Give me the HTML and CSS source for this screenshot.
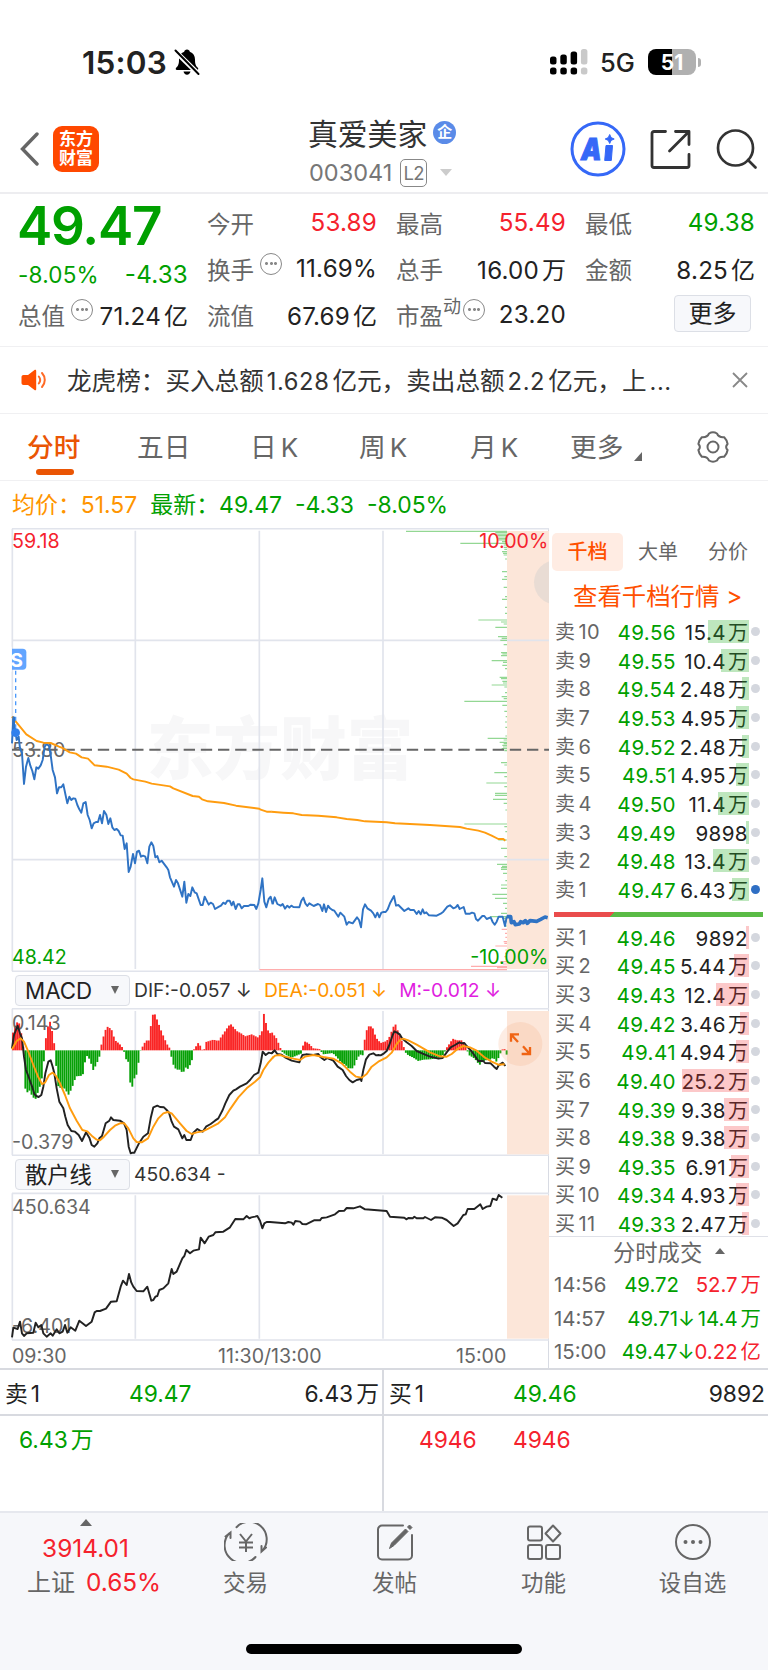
FILE: index.html
```html
<!DOCTYPE html>
<html lang="zh-CN">
<head>
<meta charset="UTF-8">
<meta name="viewport" content="width=device-width, initial-scale=1.0">
<title>真爱美家 003041</title>
<link rel="stylesheet" href="styles.css">
</head>
<body>
<div class="status-bar">
    <span class="time">15:03</span>
    <svg class="bell" width="26" height="28" viewBox="0 0 26 28">
        <path d="M13 1.500c-1.600 0-2.600 1-2.800 2.200C6.600 5 5 8 5 11.500c0 5-1 6.500-2.800 8.200-.9.900-.5 2.300.8 2.300h20c1.300 0 1.700-1.400.8-2.300C22 18 21 16.500 21 11.500 21 8 19.400 5 15.800 3.700 15.600 2.500 14.600 1.500 13 1.500zM9.500 23.500h7c-.4 2-1.700 3.200-3.500 3.200s-3.100-1.200-3.500-3.200z"/>
        <path d="M1.500 3.500l23 22.500" stroke="#fff" stroke-width="5"/>
        <path d="M1.500 2.500l23 23.500" stroke="#000" stroke-width="2" stroke-linecap="round"/>
    </svg>
    <svg class="signal" width="38" height="28" viewBox="0 0 38 28">
        <rect x="0" y="8.500" width="6.500" height="8" rx="2.500"/>
        <rect x="10.300" y="6.500" width="6.500" height="10" rx="2.500"/>
        <rect x="20.600" y="3.500" width="6.500" height="13" rx="2.500"/>
        <rect x="30.900" y="1" width="6.500" height="15.500" rx="2.500" fill="#c9c9c9"/>
        <rect x="0" y="19.500" width="6.500" height="7" rx="2.500"/>
        <rect x="10.300" y="19.500" width="6.500" height="7" rx="2.500"/>
        <rect x="20.600" y="19.500" width="6.500" height="7" rx="2.500"/>
        <rect x="30.900" y="19.500" width="6.500" height="7" rx="2.500" fill="#c9c9c9"/>
    </svg>
    <span class="network">5G</span>
    <span class="battery">51</span>
    <span class="battery-tip"></span>
</div>

<div class="header">
    <svg class="back" width="20" height="36" viewBox="0 0 20 36"><path d="M18 3L3.500 18l14.500 15" fill="none" stroke="#666" stroke-width="3.400" stroke-linecap="round"/></svg>
    <div class="logo">东方<br>财富</div>
    <div class="title">
        <div class="stock-name">真爱美家<span class="badge">企</span></div>
        <div class="stock-code">003041<span class="level">L2</span><span class="arrow-down"></span></div>
    </div>
    <svg class="ai" width="56" height="56" viewBox="0 0 56 56">
        <circle cx="28" cy="28" r="26" fill="#fff" stroke="#3568f7" stroke-width="3"/>
        <text x="11" y="38.500" class="ai-text" textLength="20.500" lengthAdjust="spacingAndGlyphs">A</text>
        <path d="M36 24.500h6.500L41.300 39.500H34.700z" fill="#3568f7" stroke="#3568f7" stroke-linejoin="round"/>
        <path d="M39.700 13.500l1.400 3.100 3.100 1.400-3.100 1.400-1.400 3.100-1.400-3.100-3.100-1.400 3.100-1.400z" fill="#3568f7" stroke="#3568f7" stroke-linejoin="round"/>
    </svg>
    <svg class="share" width="42" height="42" viewBox="0 0 42 42" fill="none" stroke="#333" stroke-width="2.800" stroke-linecap="round" stroke-linejoin="round">
        <path d="M15.500 3.500H4a2 2 0 0 0-2 2v32a2 2 0 0 0 2 2h33a2 2 0 0 0 2-2V26.500M25.500 3.500H39V16.500M38.500 4L19.500 23"/>
    </svg>
    <svg class="search" width="42" height="42" viewBox="0 0 42 42" fill="none" stroke="#333" stroke-width="2.700" stroke-linecap="round">
        <circle cx="19.500" cy="20" r="17.500"/><path d="M32 32l7.500 7.500"/>
    </svg>
</div>

<div class="quote">
    <div class="quote-col">
        <div class="price green">49.47</div>
        <div class="item change green"><span>-8.05%</span><span class="amount">-4.33</span></div>
        <div class="item"><label>总值<i class="tip"></i></label><span>71.24<em>亿</em></span></div>
    </div>
    <div class="quote-col">
        <div class="item"><label>今开</label><span class="red">53.89</span></div>
        <div class="item"><label>换手<i class="tip"></i></label><span>11.69%</span></div>
        <div class="item"><label>流值</label><span>67.69<em>亿</em></span></div>
    </div>
    <div class="quote-col">
        <div class="item"><label>最高</label><span class="red">55.49</span></div>
        <div class="item"><label>总手</label><span>16.00<em>万</em></span></div>
        <div class="item"><label>市盈<sup>动</sup><i class="tip near"></i></label><span>23.20</span></div>
    </div>
    <div class="quote-col">
        <div class="item"><label>最低</label><span class="green">49.38</span></div>
        <div class="item"><label>金额</label><span>8.25<em>亿</em></span></div>
        <div class="item end"><button class="more-btn">更多</button></div>
    </div>
</div>

<div class="notice">
    <svg width="26" height="26" viewBox="0 0 26 26">
        <path d="M2.500 8H7l6.500-5c.8-.6 1.700-.2 1.700.8v18.400c0 1-.9 1.400-1.700.8L7 18H2.500C1.300 18 .5 17.200.5 16v-6c0-1.200.8-2 2-2z" fill="#ff4f00"/>
        <path d="M17.800 9.500c1.600 2 1.600 5 0 7M21 6c3.700 4 3.700 10 0 14" fill="none" stroke="#ff6a26" stroke-width="2" stroke-linecap="round"/>
    </svg>
    <p>龙虎榜：买入总额<b>1.628</b>亿元，卖出总额<b>2.2</b>亿元，上<b>...</b></p>
    <svg class="close" width="16" height="16" viewBox="0 0 16 16"><path d="M1 1l14 14M15 1L1 15" stroke="#888" stroke-width="1.800"/></svg>
</div>

<div class="tabs">
    <span class="tab active">分时</span>
    <span class="tab">五日</span>
    <span class="tab">日<b>K</b></span>
    <span class="tab">周<b>K</b></span>
    <span class="tab">月<b>K</b></span>
    <span class="tab tab-more">更多</span>
    <svg class="gear" width="34" height="34" viewBox="0 0 34 34" fill="none" stroke="#666" stroke-width="2">
        <path d="M13 3.500Q17 1 21 3.500C22.500 7 24.500 7.600 28.200 7.200Q31 10 31.600 14C29.600 16 29.600 18 31.600 20Q31 24 28.200 26.800C24.500 26.400 22.500 27 21 30.500Q17 33 13 30.500C11.500 27 9.500 26.400 5.800 26.800Q3 24 2.400 20C4.400 18 4.400 16 2.400 14Q3 10 5.800 7.200C9.500 7.600 11.500 7 13 3.500z" stroke-linejoin="round"/>
        <circle cx="17" cy="17" r="5.500"/>
    </svg>
</div>

<div class="summary">
    <span class="orange">均价：51.57</span>
    <span class="green">最新：49.47</span>
    <span class="green">-4.33</span>
    <span class="green">-8.05%</span>
</div>

<div class="main">
    <div class="charts">
        <!-- intraday price -->
        <svg class="chart" width="549" height="444" viewBox="0 24 1647 1332">
            <text x="440" y="762" class="watermark" textLength="800" lengthAdjust="spacingAndGlyphs">东方财富</text>
            <g class="grid">
                <path d="M36 26H1647M36 361H1647M36 1019H1647M36 1354H1647"/>
                <path d="M37 26V1354M406 32V1347M778 32V1347M1149 32V1347"/>
            </g>
            <rect x="1521" y="33" width="126" height="1314" class="zone"/>
            <path d="M1521 361H1647M1521 1019H1647" class="grid"/>
            <circle cx="1668" cy="187" r="66" fill="#ccc" fill-opacity=".4"/>
            <g id="order-bars" transform="translate(810 0)"></g>
            <path d="M36 689H1647" class="mid-line"/>
            <g class="label">
                <text x="36" y="83" fill="#f5222d">59.18</text>
                <text x="36" y="710" fill="#666">53.80</text>
                <text x="36" y="1333" fill="#00a000">48.42</text>
                <text x="1645" y="83" fill="#f5222d" text-anchor="end">10.00%</text>
                <text x="1645" y="1333" fill="#00a000" text-anchor="end">-10.00%</text>
            </g>
            <polyline class="price-line" points="36,670 40,592 41,625 44,620 50,660 56,650 60,685 66,700 72,792 78,740 85,714 91,737 97,753 103,778 109,742 115,746 122,736 128,720 134,680 140,672 147,678 152,705 158,750 165,772 171,820 177,802 184,802 190,793 196,822 202,850 208,830 214,840 220,835 226,836 232,855 238,868 244,878 250,850 257,846 263,885 269,900 275,925 281,910 288,906 294,906 300,885 306,910 312,873 319,884 325,912 331,895 337,922 343,930 350,927 356,933 362,946 368,947 374,987 380,970 386,1056 392,1040 399,1002 405,1030 411,995 417,992 423,1010 429,1007 436,1010 442,1030 448,980 454,967 460,978 466,1012 472,1008 478,1027 485,1022 491,1030 500,1042 505,1050 510,1072 522,1100 528,1080 534,1090 547,1130 553,1085 559,1148 565,1122 571,1128 577,1102 584,1117 590,1120 602,1155 608,1155 614,1130 626,1154 632,1148 639,1152 645,1167 657,1160 663,1157 670,1148 676,1152 682,1142 689,1142 695,1156 700,1145 707,1167 713,1153 719,1153 725,1165 732,1158 745,1158 752,1154 763,1155 769,1167 775,1150 782,1110 787,1075 793,1145 799,1162 806,1137 812,1130 818,1153"/>
            <polyline class="avg-line" points="36,590 47,604 79,643 110,663 130,668 152,669 177,680 190,685 209,697 228,701 245,712 264,716 284,736 320,740 356,749 380,761 392,774 400,778 436,785 455,791 510,799 520,805 578,828 597,830 606,838 624,844 672,849 708,857 778,866 782,869 800,875 815,875"/>
            <g transform="translate(810 0)">
                <polyline class="avg-line" points="4,875 40,878 70,880 95,885 145,887 200,892 230,897 262,900 285,904 350,907 375,910 480,915 570,921 590,926 625,932 645,938 665,947 685,957 700,957 706,962"/>
                <polyline class="price-line" points="8,1153 14,1132 22,1152 32,1157 38,1152 45,1166 52,1157 58,1163 64,1157 70,1161 88,1162 94,1142 100,1133 106,1150 112,1158 118,1150 131,1158 144,1152 150,1155 157,1173 162,1153 168,1176 174,1157 180,1165 187,1170 193,1172 205,1190 211,1178 223,1190 230,1214 236,1206 248,1210 261,1192 267,1200 273,1222 279,1168 285,1153 292,1165 303,1172 310,1180 316,1192 322,1178 328,1192 334,1178 341,1176 347,1176 353,1168 360,1150 372,1128 378,1157 385,1155 403,1173 415,1165 421,1170 432,1170 440,1182 446,1173 452,1183 458,1168 463,1180 469,1177 477,1186 500,1187 512,1181 520,1175 532,1160 540,1156 550,1165 557,1162 563,1155 569,1167 581,1161 587,1181 600,1181 606,1178 613,1180 618,1197 624,1202 637,1188 643,1188 650,1197 662,1192 668,1206 674,1214 680,1205 686,1190 698,1190 705,1218 710,1190"/>
                <polyline class="auction-line" points="710,1190 722,1190 724,1208 732,1205 736,1214 748,1212 752,1205 760,1208 766,1202 772,1210 780,1202 800,1204 812,1198 825,1191 833,1193"/>
            </g>
            <path d="M47 452V625" stroke="#4a98fb" stroke-width="4" stroke-dasharray="12 11"/>
            <path d="M41 590V625" stroke="#2f73c4" stroke-width="8"/>
            <circle cx="47" cy="638" r="13" fill="#2f80ed"/>
            <path d="M36 386H68Q79 386 79 397V438Q79 449 68 449H36z" fill="#62a5ff"/>
            <text x="31" y="440" class="marker">S</text>
            <path d="M28 380H35V455H28z" fill="#fff"/>
        </svg>

        <div class="indicator">
            <button class="select">MACD<i></i></button>
            <span>DIF:-0.057 ↓</span>
            <span class="orange">DEA:-0.051 ↓</span>
            <span class="magenta">M:-0.012 ↓</span>
        </div>
        <svg class="chart" width="549" height="148" viewBox="0 114 1647 444">
            <g class="grid">
                <path d="M36 116H1647M36 556H1647M37 116V556"/>
                <path d="M406 123V553M778 123V553M1149 123V553"/>
            </g>
            <rect x="1521" y="123" width="126" height="430" class="zone"/>
            <g id="macd-bars"></g>
            <g class="label" fill="#666">
                <text x="36" y="180">0.143</text>
                <text x="36" y="536">-0.379</text>
            </g>
            <polyline class="dark-line" points="36,235 42,195 53,167 60,190 66,205 72,260 78,300 85,318 97,352 103,372 109,378 116,381 124,375 130,350 136,310 145,275 152,271 158,290 163,310 170,355 178,395 190,415 196,440 203,465 214,483 225,485 236,495 246,513 258,487 268,503 275,525 283,530 292,520 298,505 306,498 317,460 328,452 333,442 340,450 360,452 372,460 380,480 386,530 392,550 398,548 403,548 412,530 418,518 430,500 444,490 452,445 460,412 472,407 480,411 492,412 500,420 507,428 515,455 522,470 535,478 547,505 553,495 559,510 572,510 580,488 592,477 600,482 608,485 618,470 632,462 645,452 655,445 668,420 676,400 688,375 700,362 708,358 720,350 740,340 750,330 762,315 775,308 782,280 788,245 797,255 806,248 815,250 822,243"/>
            <polyline class="avg-line" points="36,238 50,213 62,205 72,215 85,245 100,285 115,322 126,342 135,338 147,315 158,308 168,318 180,340 195,375 210,415 230,452 247,480 262,484 275,497 290,509 300,511 312,500 330,480 345,467 360,460 373,460 385,475 400,505 410,516 425,517 444,505 460,470 475,445 490,430 503,426 515,430 540,460 560,483 575,492 590,487 608,484 625,476 655,460 675,442 690,418 715,382 740,355 765,335 780,322 790,300 805,278 820,261"/>
            <g transform="translate(810 0)">
                <polyline class="dark-line" points="5,250 14,241 22,252 35,254 45,262 65,272 88,277 97,255 108,253 130,255 145,252 152,262 163,270 172,264 190,272 203,290 218,300 228,318 238,330 248,337 260,330 272,327 274,333 280,300 288,268 298,254 310,250 318,256 325,255 332,256 342,250 350,243 358,225 368,195 373,184 380,187 390,194 396,205 410,217 425,228 440,243 458,251 480,260 505,266 518,264 530,247 542,232 555,225 568,217 575,220 583,219 590,228 604,243 615,258 625,273 640,273 645,279 662,280 672,290 680,297 686,286 698,278 706,288"/>
                <polyline class="avg-line" points="8,263 15,257 30,255 45,260 70,266 90,270 105,260 130,255 160,261 190,266 215,280 240,305 258,320 275,323 290,312 305,290 325,275 350,262 365,248 380,222 392,208 400,206 415,211 440,224 480,247 510,259 530,260 545,252 565,235 580,228 600,232 620,242 645,263 665,275 685,284 704,283"/>
                <circle cx="751" cy="222" r="66" fill="#f5a37a" fill-opacity=".2"/>
                <path d="M723 215V193H747M724 194L744 216M780 231V252H755M779 251L759 229" fill="none" stroke="#f06414" stroke-width="7"/>
            </g>
        </svg>

        <div class="indicator">
            <button class="select">散户线<i></i></button>
            <span>450.634 -</span>
        </div>
        <svg class="chart" width="549" height="149" viewBox="0 666 1647 447">
            <g class="grid">
                <path d="M36 670H1647M36 1110H1647M37 670V1110"/>
                <path d="M406 676V1106M778 676V1106M1149 676V1106"/>
            </g>
            <rect x="1521" y="676" width="126" height="430" class="zone"/>
            <g class="label" fill="#666">
                <text x="36" y="733">450.634</text>
                <text x="36" y="1089">-6.401</text>
            </g>
            <polyline class="dark-line" points="36,1102 40,1073 53,1077 60,1055 66,1090 72,1098 80,1090 100,1088 107,1058 115,1072 124,1065 130,1090 140,1100 152,1090 158,1097 170,1078 178,1090 188,1085 195,1065 202,1088 212,1072 226,1082 238,1052 258,1068 275,1055 284,1027 290,1023 300,1023 318,1016 333,995 350,994 362,950 369,932 380,945 387,912 394,938 400,950 410,963 430,964 442,950 454,992 460,990 466,980 472,978 478,960 490,955 505,940 515,897 520,912 530,905 547,865 553,858 559,840 570,850 580,842 597,838 602,803 614,820 626,800 640,795 646,787 670,785 690,772 706,747 730,748 740,738 748,745 754,742 765,740 772,738 780,752 787,775 793,760 800,756 812,756"/>
            <g transform="translate(810 0)">
                <polyline class="dark-line" points="0,756 45,760 55,756 65,758 70,764 76,753 90,755 97,762 108,763 132,751 150,751 155,744 170,742 195,733 207,723 223,722 230,714 250,715 270,709 285,718 350,723 360,740 403,743 409,748 415,744 428,745 433,740 440,745 460,745 465,741 483,750 495,742 515,743 530,750 551,768 563,760 580,735 587,733 593,717 613,717 631,703 638,717 650,710 661,708 668,686 680,690 686,675 697,683"/>
            </g>
        </svg>
        <div class="axis"><span>09:30</span><span>11:30/13:00</span><span>15:00</span></div>
    </div>

    <div class="side">
        <div class="side-tabs"><span class="on">千档</span><span>大单</span><span>分价</span></div>
        <div class="view-all">查看千档行情 &gt;</div>
        <div class="book" id="sell"></div>
        <div class="ratio"></div>
        <div class="book" id="buy"></div>
        <div class="deals-title">分时成交<i class="arrow-up"></i></div>
        <div class="deal"><span>14:56</span><span class="green">49.72</span><span class="red vol">52.7<em>万</em></span></div>
        <div class="deal"><span>14:57</span><span class="green down">49.71↓</span><span class="green vol">14.4<em>万</em></span></div>
        <div class="deal"><span>15:00</span><span class="green down">49.47↓</span><span class="red vol">0.22<em>亿</em></span></div>
    </div>
</div>

<div class="queue">
    <div class="queue-col">
        <div class="queue-head"><span>卖<em>1</em></span><span class="green">49.47</span><span>6.43<em>万</em></span></div>
        <div class="queue-list green"><span>6.43<em>万</em></span></div>
    </div>
    <div class="queue-col right">
        <div class="queue-head"><span>买<em>1</em></span><span class="green">49.46</span><span>9892</span></div>
        <div class="queue-list red"><span>4946</span><span>4946</span></div>
    </div>
</div>

<div class="bottom">
    <div class="nav">
        <div class="index">
            <i class="arrow-up"></i>
            <div class="red">3914.01</div>
            <div><label>上证</label><span class="red">0.65%</span></div>
        </div>
        <div class="nav-item">
            <svg width="44" height="38" viewBox="0 0 44 38" fill="none" stroke="#666" stroke-width="2">
                <path d="M12.500 4.200A17.500 17.500 0 0 1 39 27M31.500 34A17.500 17.500 0 0 1 5 10.500M1.500 13.500L6.500 9.500V15M42 24.500L37.500 28.500V23" stroke-linecap="round"/>
                <path d="M16 11l6 7.500 6-7.500M22 18.500V29M15 19.500h14M15 24.500h14"/>
            </svg>
            <span>交易</span>
        </div>
        <div class="nav-item">
            <svg width="38" height="38" viewBox="0 0 38 38" fill="none" stroke="#666" stroke-width="2">
                <path d="M27 2.500H6a4 4 0 0 0-4 4v26a4 4 0 0 0 4 4h26a4 4 0 0 0 4-4V12" stroke-linecap="round"/>
                <path d="M13.500 25.500l2-5.500L29.500 6l2.500 2.500-14 14zM31.500 4l2-2 2.500 2.500-2 2z" fill="#666" stroke-width="1"/>
            </svg>
            <span>发帖</span>
        </div>
        <div class="nav-item">
            <svg width="36" height="38" viewBox="0 0 36 38" fill="none" stroke="#666" stroke-width="2">
                <rect x="2" y="3.500" width="14" height="14" rx="2"/>
                <rect x="2" y="22" width="14" height="14" rx="2"/>
                <rect x="20" y="22" width="14" height="14" rx="2"/>
                <path d="M27 2.500l7.500 8-7.500 8-7.500-8z" stroke-linejoin="round"/>
            </svg>
            <span>功能</span>
        </div>
        <div class="nav-item">
            <svg width="38" height="38" viewBox="0 0 38 38">
                <circle cx="19" cy="19" r="17" fill="none" stroke="#666" stroke-width="2"/>
                <g fill="#666"><circle cx="11.500" cy="19" r="2"/><circle cx="19" cy="19" r="2"/><circle cx="26.500" cy="19" r="2"/></g>
            </svg>
            <span>设自选</span>
        </div>
    </div>
    <div class="home-bar"></div>
</div>

<script src="script.js"></script>
</body>
</html>
```
FILE: styles.css
```css
body {
    font-family: Inter, "Noto Sans CJK SC", sans-serif;
    background-color: #fff;
    color: #222;
    margin: 0;
    width: 768px;
    height: 1670px;
    overflow: hidden;
}

* {
    box-sizing: border-box;
}

em, i {
    font-style: normal;
}

em {
    margin-left: 3px;
}

button {
    font-family: inherit;
    color: #222;
}

svg {
    display: block;
    flex: none;
}

.red { color: #f5222d; }
.green { color: #00a000; }
.orange { color: #ff9500; }
.magenta { color: #e01ee0; }

/* Status bar */
.status-bar {
    display: flex;
    align-items: center;
    height: 106px;
    padding: 18px 0 0 82px;
}

.time {
    font-size: 31.500px;
    font-weight: 600;
    width: 92px;
    letter-spacing: 0.2px;
}

.signal {
    margin-left: 350px;
}

.network {
    font-size: 25.500px;
    font-weight: 500;
    width: 48px;
    margin-left: 12px;
}

.battery {
    width: 48px;
    height: 26px;
    border-radius: 8px;
    background: linear-gradient(90deg, #000 51%, #b0b0b0 51%);
    color: #fff;
    font-size: 21px;
    font-weight: 700;
    line-height: 27px;
    text-align: center;
}

.battery-tip {
    width: 3px;
    height: 9px;
    margin-left: 2px;
    border-radius: 0 4px 4px 0;
    background: #b0b0b0;
}

/* Header */
.header {
    display: flex;
    align-items: center;
    height: 88px;
    padding-left: 19px;
    border-bottom: 2px solid #ededf0;
}

.logo {
    width: 46px;
    height: 46px;
    margin-left: 14px;
    padding-top: 4px;
    border-radius: 9px;
    background: #ff4800;
    color: #fff;
    font-size: 17px;
    font-weight: 700;
    line-height: 19px;
    text-align: center;
}

.title {
    width: 262px;
    margin-left: 154px;
    padding: 6px 0 0 55px;
}

.stock-name {
    display: flex;
    align-items: center;
    height: 41px;
    font-size: 29.800px;
    color: #333;
}

.badge {
    width: 23px;
    height: 23px;
    margin-left: 6px;
    border-radius: 50%;
    background: #5a8be8;
    color: #fff;
    font-size: 15px;
    font-weight: 700;
    line-height: 22px;
    text-align: center;
}

.stock-code {
    display: flex;
    align-items: center;
    height: 40px;
    padding-left: 1px;
    font-size: 23.500px;
    color: #777;
}

.level {
    width: 27px;
    height: 28px;
    margin-left: 8px;
    border: 1.500px solid #888;
    border-radius: 5px;
    font-size: 18.500px;
    letter-spacing: -0.5px;
    line-height: 26px;
    text-align: center;
}

.arrow-down {
    margin-left: 13px;
    border: 6.500px solid transparent;
    border-top: 7px solid #ccc;
    border-bottom: 0;
}

.ai {
    margin-left: 55px;
}

.ai-text {
    font-size: 30px;
    font-weight: 900;
    font-style: italic;
    fill: #3568f7;
    stroke: #3568f7;
    stroke-width: 1px;
}

.share {
    margin-left: 24px;
}

.search {
    margin-left: 24px;
}

/* Quote */
.quote {
    display: flex;
    gap: 19px;
    height: 153px;
    padding: 6px 0 0 18px;
    border-bottom: 1px solid #f0f0f2;
}

.quote-col {
    width: 170px;
    flex: none;
}

.price {
    height: 52px;
    margin-left: -1px;
    font-size: 53px;
    font-weight: 600;
    line-height: 53px;
    letter-spacing: -1.200px;
    white-space: nowrap;
}

.item {
    display: flex;
    justify-content: space-between;
    align-items: center;
    height: 46px;
    padding-bottom: 1px;
    font-size: 24.200px;
    letter-spacing: 0.2px;
    white-space: nowrap;
}

.item label {
    display: flex;
    align-items: center;
    font-size: 23.500px;
    letter-spacing: 0;
    color: #666;
}

.item em {
    font-size: 24px;
    letter-spacing: 0;
}

.item sup {
    font-size: 18px;
    line-height: 20px;
    margin-bottom: 16px;
}

.change {
    height: 46px;
    margin-bottom: -6px;
    font-size: 22.500px;
}

.amount {
    font-size: 24.200px;
}

.end {
    justify-content: flex-end;
    padding: 0 4px 3px 0;
}

.tip {
    width: 22px;
    height: 22px;
    margin: 0 0 10px 6px;
    border: 1.500px solid #888;
    border-radius: 50%;
    background: radial-gradient(circle, #888 1.200px, transparent 1.700px) center / 5px 5px no-repeat,
        radial-gradient(circle, #888 1.200px, transparent 1.700px) 2.500px center / 5px 5px no-repeat,
        radial-gradient(circle, #888 1.200px, transparent 1.700px) 12px center / 5px 5px no-repeat;
}

.near {
    margin-left: 2px;
}

.more-btn {
    width: 77px;
    height: 37px;
    padding: 0;
    border: 1.500px solid #dcdfe6;
    border-radius: 4px;
    background: #f7f8fb;
    font-size: 24px;
    line-height: 33px;
}

/* Notice */
.notice {
    display: flex;
    align-items: center;
    height: 67px;
    padding-left: 21px;
    border-bottom: 1px solid #f0f0f2;
}

.notice p {
    width: 645px;
    margin: 0 0 3px 20px;
    font-size: 24.600px;
    color: #333;
    white-space: nowrap;
}

.notice b {
    margin: 0 3px;
    font-weight: 400;
    font-size: 23.700px;
    letter-spacing: 0.6px;
}

.close {
    margin-left: 20px;
}

/* Period tabs */
.tabs {
    display: flex;
    align-items: center;
    height: 67px;
    padding-left: 27px;
    border-bottom: 1px solid #f0f0f2;
    font-size: 26.700px;
    color: #666;
}

.tab {
    position: relative;
    width: 108px;
    line-height: 60px;
}

.tab b {
    margin-left: 4px;
    font-weight: 400;
    font-size: 26px;
}

.tab:nth-child(2) { width: 113px; margin-left: 2px; }
.tab:nth-child(3) { width: 109px; }
.tab:nth-child(4) { width: 111px; }
.tab:nth-child(5) { width: 100px; }

.active {
    color: #ea5504;
    font-weight: 500;
}

.active::after {
    content: "";
    position: absolute;
    left: 9px;
    bottom: 2px;
    width: 38px;
    height: 6px;
    border-radius: 3px;
    background: #ea5504;
}

.tab-more {
    width: 126px;
}

.tab-more::after {
    content: "";
    position: absolute;
    left: 64px;
    top: 35px;
    border-left: 8px solid transparent;
    border-bottom: 9px solid #666;
}

/* Average / latest line */
.summary {
    display: flex;
    gap: 13px;
    height: 47px;
    padding-left: 12px;
    font-size: 22.950px;
    line-height: 49px;
}

/* Charts */
.main {
    display: flex;
    height: 842px;
    border-bottom: 2px solid #d8dae0;
}

.charts {
    width: 549px;
    flex: none;
    border-right: 1px solid #d8dbe3;
}

.chart {
    width: 549px;
}

.grid {
    fill: none;
    stroke: #e1e4ec;
    stroke-width: 5;
}

.zone {
    fill: #fce6d9;
}

.mid-line {
    stroke: #666;
    stroke-width: 6;
    stroke-dasharray: 34 17.500;
}

.label {
    font-size: 59px;
}

.watermark {
    font-size: 205px;
    font-weight: 900;
    fill: #f7f7f8;
}

.marker {
    font-size: 58px;
    font-weight: 700;
    fill: #fff;
}

.price-line, .auction-line, .avg-line, .dark-line {
    fill: none;
    stroke-width: 5.800;
    stroke-linejoin: round;
}

.price-line, .auction-line { stroke: #2f73c4; }
.auction-line { stroke-width: 11; }
.avg-line { stroke: #ff9c0f; }
.dark-line { stroke: #222; }

.indicator {
    display: flex;
    align-items: center;
    gap: 12px;
    height: 36px;
    padding-left: 15px;
    font-size: 19.300px;
    color: #333;
    white-space: nowrap;
}

.select {
    display: flex;
    align-items: center;
    justify-content: space-between;
    width: 115px;
    height: 31px;
    margin-right: -8px;
    padding: 0 10px 0 9px;
    border: 1.500px solid #dcdfe6;
    border-radius: 4px;
    background: #f7f8fb;
    font-size: 22.300px;
    line-height: 29px;
}

.select i {
    border: 4.500px solid transparent;
    border-top: 8px solid #666;
    border-bottom: 0;
}

.axis {
    display: flex;
    padding-left: 12px;
    font-size: 19.600px;
    line-height: 30px;
    color: #666;
}

.axis span {
    width: 206px;
    flex: none;
}

.axis span + span {
    width: 238px;
}

.axis span:last-child {
    width: auto;
}

/* Order book */
.side {
    width: 219px;
    flex: none;
}

.side-tabs {
    display: flex;
    height: 47px;
    padding: 5px 0 0 3px;
    font-size: 20px;
    color: #666;
}

.side-tabs span {
    width: 70px;
    height: 38px;
    line-height: 39px;
    text-align: center;
}

.side-tabs .on {
    width: 71px;
    border-radius: 5px;
    background: #ffece3;
    color: #ff5000;
    font-weight: 500;
}

.view-all {
    height: 43px;
    padding-left: 24px;
    font-size: 24.400px;
    line-height: 43px;
    color: #ff5000;
    white-space: nowrap;
}

.row {
    position: relative;
    display: flex;
    height: 28.670px;
    padding-left: 6px;
    font-size: 20.600px;
    line-height: 29px;
    letter-spacing: 0.4px;
    white-space: nowrap;
}

.row label {
    width: 50px;
    color: #666;
    font-size: 20px;
}

.row label em {
    margin-left: 3px;
}

.row .num {
    width: 71px;
    text-align: right;
}

.row .vol {
    width: 72px;
    text-align: right;
}

.row .vol em {
    margin-left: 2px;
    font-size: 20px;
    letter-spacing: 0;
}

.depth {
    position: absolute;
    top: 2px;
    right: 19px;
    height: 23px;
    background: rgba(40, 175, 40, 0.3);
}

#buy .depth {
    background: rgba(245, 50, 55, 0.27);
}

.dot {
    width: 9px;
    height: 9px;
    margin: 9px 0 0 3px;
    border-radius: 50%;
    background: #d4d7de;
}

.dot.on {
    background: #2f6fc4;
}

.ratio {
    height: 5px;
    margin: 7px 5px 7px 5px;
    background: linear-gradient(135deg, #ea4c4c 28.500%, #5abb46 28.500%);
}

.deals-title {
    display: flex;
    align-items: center;
    height: 31px;
    margin-top: -3px;
    padding: 0 0 1px 64px;
    border-top: 1.500px solid #dfe1e8;
    font-size: 22.300px;
    color: #666;
}

.arrow-up {
    border: 5px solid transparent;
    border-top: 0;
    border-bottom: 6px solid #666;
}

.deals-title .arrow-up {
    margin-left: 13px;
}

.deal {
    display: flex;
    height: 33.800px;
    padding: 0 7px 0 5px;
    font-size: 20.400px;
    line-height: 35px;
    color: #666;
    white-space: nowrap;
}

.deal span {
    width: 57px;
}

.deal span + span {
    width: 68px;
    text-align: right;
}

.deal span.down {
    width: 84px;
}

.deal span.vol {
    flex: 1;
}

/* Level one queue */
.queue {
    display: flex;
    height: 141px;
    font-size: 22.800px;
    white-space: nowrap;
}

.queue-col {
    width: 384px;
    border-right: 2px solid #d8dae0;
}

.queue-col.right {
    border: 0;
}

.queue-head {
    display: flex;
    height: 46px;
    padding: 0 3px 0 5px;
    border-bottom: 2px solid #d8dae0;
    line-height: 48px;
}

.queue-head span:first-child {
    width: 124px;
}

.queue-head span:last-child {
    margin-left: auto;
}

.queue-list {
    padding-left: 19px;
    line-height: 48px;
}

.queue-list span {
    display: inline-block;
    width: 94px;
}

.right .queue-list {
    padding-left: 35px;
}

/* Bottom bar */
.bottom {
    height: 159px;
    border-top: 2px solid #e6e8ee;
    background: #f6f7fa;
}

.nav {
    display: flex;
    height: 131px;
    color: #666;
    font-size: 22.500px;
}

.index {
    display: flex;
    flex-direction: column;
    align-items: center;
    width: 171px;
    padding-top: 6px;
    line-height: 34px;
}

.index .arrow-up {
    margin-bottom: 5px;
    border-width: 0 6.500px 7px;
}

.index .red {
    font-size: 24.400px;
}

.index label {
    margin: 0 11px 0 17px;
    font-size: 24px;
}

.nav-item {
    display: flex;
    flex-direction: column;
    align-items: center;
    width: 149px;
    padding-top: 10px;
    line-height: 34px;
}

.nav-item span {
    margin-top: 5px;
}

.home-bar {
    width: 276px;
    height: 10px;
    margin: 0 auto;
    border-radius: 5px;
    background: #000;
}
```
FILE: script.js
```js
// [price, volume, depth width, highlighted]
const sell = [
    ['49.56', '15.4万', 41], ['49.55', '10.4万', 28], ['49.54', '2.48万', 7], ['49.53', '4.95万', 13],
    ['49.52', '2.48万', 7], ['49.51', '4.95万', 13], ['49.50', '11.4万', 31], ['49.49', '9898', 3],
    ['49.48', '13.4万', 36], ['49.47', '6.43万', 17, true]
];
const buy = [
    ['49.46', '9892', 3], ['49.45', '5.44万', 15], ['49.43', '12.4万', 33], ['49.42', '3.46万', 9],
    ['49.41', '4.94万', 13], ['49.40', '25.2万', 67], ['49.39', '9.38万', 25], ['49.38', '9.38万', 25],
    ['49.35', '6.91万', 18], ['49.34', '4.93万', 13], ['49.33', '2.47万', 7]
];

function renderBook(id, name, rows, level) {
    document.getElementById(id).innerHTML = rows.map((r, i) => `
        <div class="row">
            <label>${name}<em>${level(i)}</em></label>
            <span class="num green">${r[0]}</span>
            <span class="vol">${r[1].replace('万', '<em>万</em>')}</span>
            <span class="depth" style="width: ${r[2]}px"></span>
            <span class="dot ${r[3] ? 'on' : ''}"></span>
        </div>`).join('');
}

renderBook('sell', '卖', sell, i => 10 - i);
renderBook('buy', '买', buy, i => i + 1);

// MACD histogram, [x, height] key points
const macd = [
    [38,50],[47,80],[56,88],[65,45],[70,10],[73,-105],[80,-128],[88,-120],[97,-138],[106,-148],[115,-122],[124,-95],[131,-40],
    [136,25],[142,65],[149,90],[155,65],[162,25],[167,-20],[172,-105],[180,-112],[195,-115],[205,-134],[215,-115],[228,-78],[248,-76],
    [256,-30],[262,-15],[270,-30],[280,-60],[290,-40],[298,-20],[303,12],[310,40],[320,72],[334,64],[345,30],[358,20],[370,5],
    [377,-25],[385,-35],[391,-100],[396,-113],[402,-85],[408,-80],[415,-40],[420,-4],[426,8],[438,30],[446,28],[452,70],[457,105],
    [463,112],[472,90],[485,55],[500,20],[508,8],[513,-15],[522,-50],[530,-58],[540,-58],[549,-70],[556,-50],[562,-58],[575,-35],
    [580,0],[588,12],[594,22],[600,15],[606,2],[612,0],[618,25],[640,32],[655,28],[670,50],[680,65],[691,80],[700,70],[710,58],
    [725,50],[735,42],[755,48],[775,38],[782,50],[787,60],[790,117],[796,90],[802,65],[808,50],[815,55],[830,35],[838,15],[845,-3],
    [860,-15],[875,-22],[903,-10],[907,8],[913,27],[925,22],[940,6],[958,4],[962,0],[968,-12],[985,-10],[998,-8],[1010,-20],
    [1025,-38],[1035,-42],[1045,-54],[1060,-54],[1072,-22],[1085,-10],[1088,-15],[1092,22],[1100,60],[1108,75],[1118,68],[1128,38],
    [1142,22],[1160,28],[1168,40],[1176,60],[1185,82],[1192,62],[1202,38],[1210,15],[1215,-5],[1225,-15],[1240,-22],[1255,-32],
    [1270,-28],[1290,-27],[1310,-24],[1325,-20],[1335,-3],[1340,8],[1350,22],[1358,35],[1370,30],[1385,30],[1397,15],[1402,-2],
    [1408,-15],[1420,-22],[1430,-32],[1438,-45],[1446,-35],[1455,-30],[1470,-28],[1480,-22],[1490,-35],[1500,-12],[1505,0],
    [1512,8],[1518,-8]
];

function heightAt(x) {
    let i = 1;
    while (i < macd.length - 1 && macd[i][0] < x) i++;
    const [x0, h0] = macd[i - 1];
    const [x1, h1] = macd[i];
    return h0 + (h1 - h0) * (x - x0) / (x1 - x0);
}

let bars = '';
for (let x = 39; x < 1520; x += 6.17) {
    const h = heightAt(x);
    bars += `<rect x="${(x - 2.8).toFixed(1)}" y="${h > 0 ? 241 - h : 241}" width="5.7" height="${Math.abs(h)}" fill="${h > 0 ? '#fa2424' : '#06a006'}"/>`;
}
document.getElementById('macd-bars').innerHTML = bars;

// Volume by price, [y, length]
const up = [
    [34,303],[37,35],[42,40],[46,30],[51,32],[56,28],[60,30],[65,15],[70,140],[75,10],[82,10],[88,8],[95,15],[100,12],[105,10],
    [117,6],[155,15],[170,8],[178,15],[202,10],[230,6],[238,15],[262,6],[280,6],[300,86],[306,18],[312,10],[322,35],[350,27],
    [355,16],[361,20],[374,10],[398,18],[402,14],[407,18],[422,46],[427,12],[436,14],[446,6],[472,22],[476,18],[484,14],[489,12],
    [495,46],[501,8],[518,6],[530,16],[536,10],[544,128],[556,14],[574,8],[590,4],[606,6],[622,5],[648,5],[655,58],[660,10],
    [667,22],[671,10],[676,14],[681,12],[686,16],[692,8],[728,18],[735,8],[758,38],[770,8],[789,62],[800,8],[820,36],[826,36],
    [838,42],[850,10],[870,5],[912,128],[920,8],[935,5],[960,26],[985,18],[1010,8],[1033,30],[1039,15],[1043,18],[1048,18],
    [1060,12],[1082,5],[1095,18],[1105,18],[1123,44],[1135,36],[1150,12],[1165,6],[1180,18],[1190,50],[1195,14],[1205,10],[1218,8]
];
const down = [
    [1228,16],[1240,6],[1252,5],[1265,10],[1270,8],[1278,35],[1290,5],[1300,6],[1310,8],[1325,20],[1332,12],[1339,108],[1343,30],[1349,743]
];
const line = (list, color) => `<path d="${list.map(([y, w]) => `M711 ${y}h-${w}`).join('')}" stroke="${color}" stroke-width="3.5"/>`;
document.getElementById('order-bars').innerHTML = line(up, '#93d793') + line(down, '#ffadad');
```
